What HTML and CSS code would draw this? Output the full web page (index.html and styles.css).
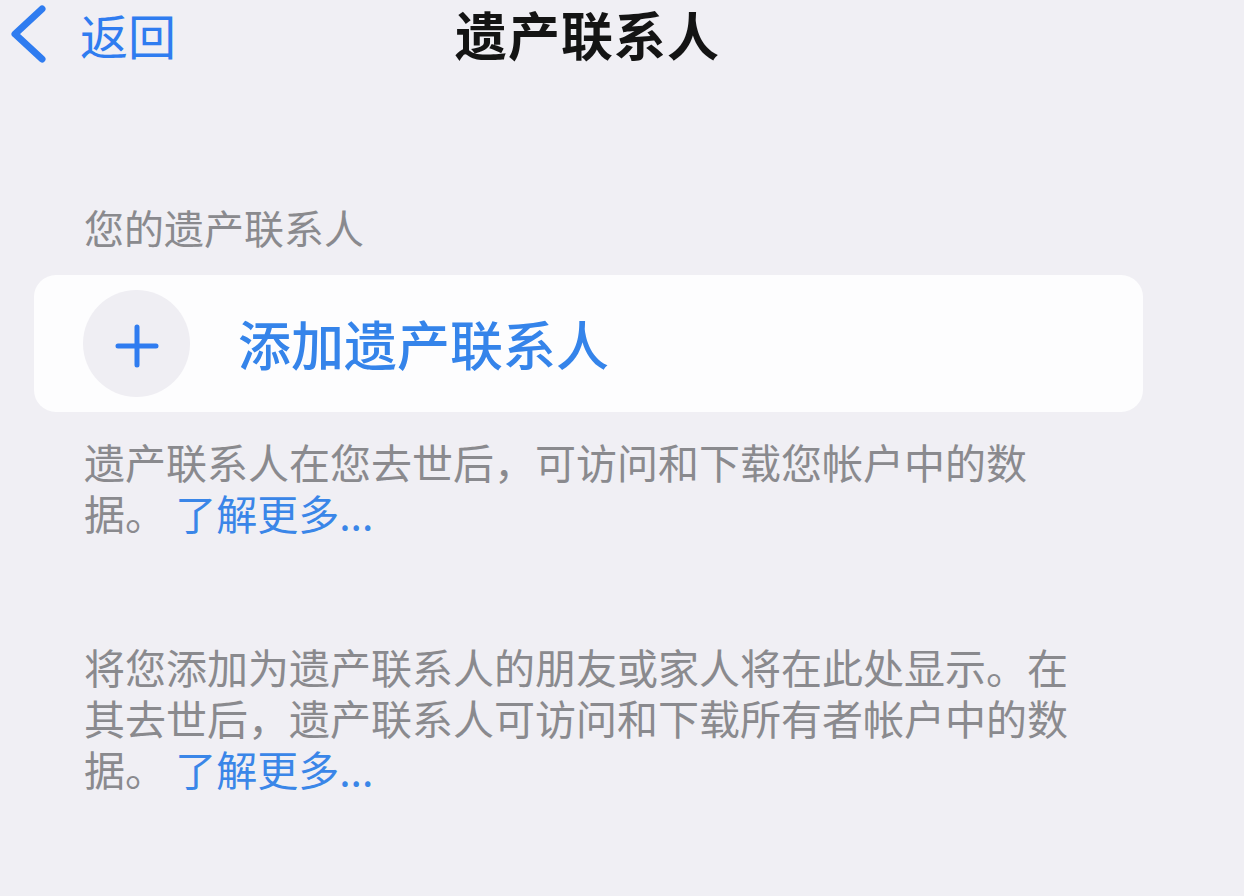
FILE: index.html
```html
<!DOCTYPE html>
<html lang="zh-CN">
<head>
<meta charset="utf-8">
<title>遗产联系人</title>
<link rel="stylesheet" href="styles.css">
</head>
<body>
<header class="navbar">
  <svg class="back-icon" width="56" height="68" viewBox="0 0 56 68" aria-hidden="true">
    <polyline points="42,9 15,34 42,59" fill="none" stroke="#2f7cf0" stroke-width="7" stroke-linecap="round" stroke-linejoin="round"/>
  </svg>
  <span class="back-text">返回</span>
  <h1 class="title">遗产联系人</h1>
</header>

<main class="content">
  <div class="section-label">您的遗产联系人</div>
  <div class="card">
    <div class="add-circle">
      <svg width="44" height="44" viewBox="0 0 44 44" aria-hidden="true">
        <path d="M22 3 V41 M3 22 H41" stroke="#2f7cf0" stroke-width="5" stroke-linecap="round"/>
      </svg>
    </div>
    <span class="add-text">添加遗产联系人</span>
  </div>
  <p class="note note-first">遗产联系人在您去世后，可访问和下载您帐户中的数据。 <span class="link">了解更多...</span></p>
  <p class="note note-second">将您添加为遗产联系人的朋友或家人将在此处显示。在其去世后，遗产联系人可访问和下载所有者帐户中的数据。 <span class="link">了解更多...</span></p>
</main>
</body>
</html>
```

FILE: styles.css
```css
html, body {
  margin: 0;
  padding: 0;
}
body {
  background: #f0eff4;
  font-family: "Noto Sans CJK SC", "Noto Sans", sans-serif;
  width: 1244px;
  height: 896px;
  overflow: hidden;
}
.navbar {
  display: flex;
  align-items: center;
  height: 72px;
  padding-bottom: 0;
}
.back-icon {
  flex: none;
  display: block;
  margin-top: -4px;
}
.back-text {
  margin-left: 24px;
  font-size: 48px;
  line-height: 64px;
  margin-top: -4px;
  color: #2f7cf0;
}
.title {
  margin: -4px 0 0 279px;
  font-size: 52px;
  line-height: 64px;
  font-weight: 700;
  color: #141414;
  letter-spacing: 1px;
  white-space: nowrap;
}
.content {
  display: flex;
  flex-direction: column;
}
.section-label {
  margin: 130px 0 0 84px;
  font-size: 40px;
  line-height: 50px;
  color: #8a8a8e;
}
.card {
  margin: 23px 101px 0 34px;
  height: 137px;
  box-sizing: border-box;
  padding: 15px 0 15px 49px;
  background: #fdfdfe;
  border-radius: 22px;
  display: flex;
  align-items: center;
}
.add-circle {
  width: 107px;
  height: 107px;
  border-radius: 50%;
  background: #efeef3;
  display: flex;
  align-items: center;
  justify-content: center;
  flex: none;
}
.add-circle svg {
  display: block;
  margin-top: 4px;
}
.add-text {
  margin-left: 48px;
  font-size: 53px;
  line-height: 60px;
  margin-top: -2px;
  color: #3584ea;
  font-weight: 500;
}
.note {
  margin: 0 0 0 84px;
  width: 1000px;
  font-size: 41px;
  line-height: 51px;
  color: #8a8a8e;
}
.note-first {
  margin-top: 24px;
}
.note-second {
  margin-top: 103px;
}
.link {
  color: #3a86e8;
}
```
